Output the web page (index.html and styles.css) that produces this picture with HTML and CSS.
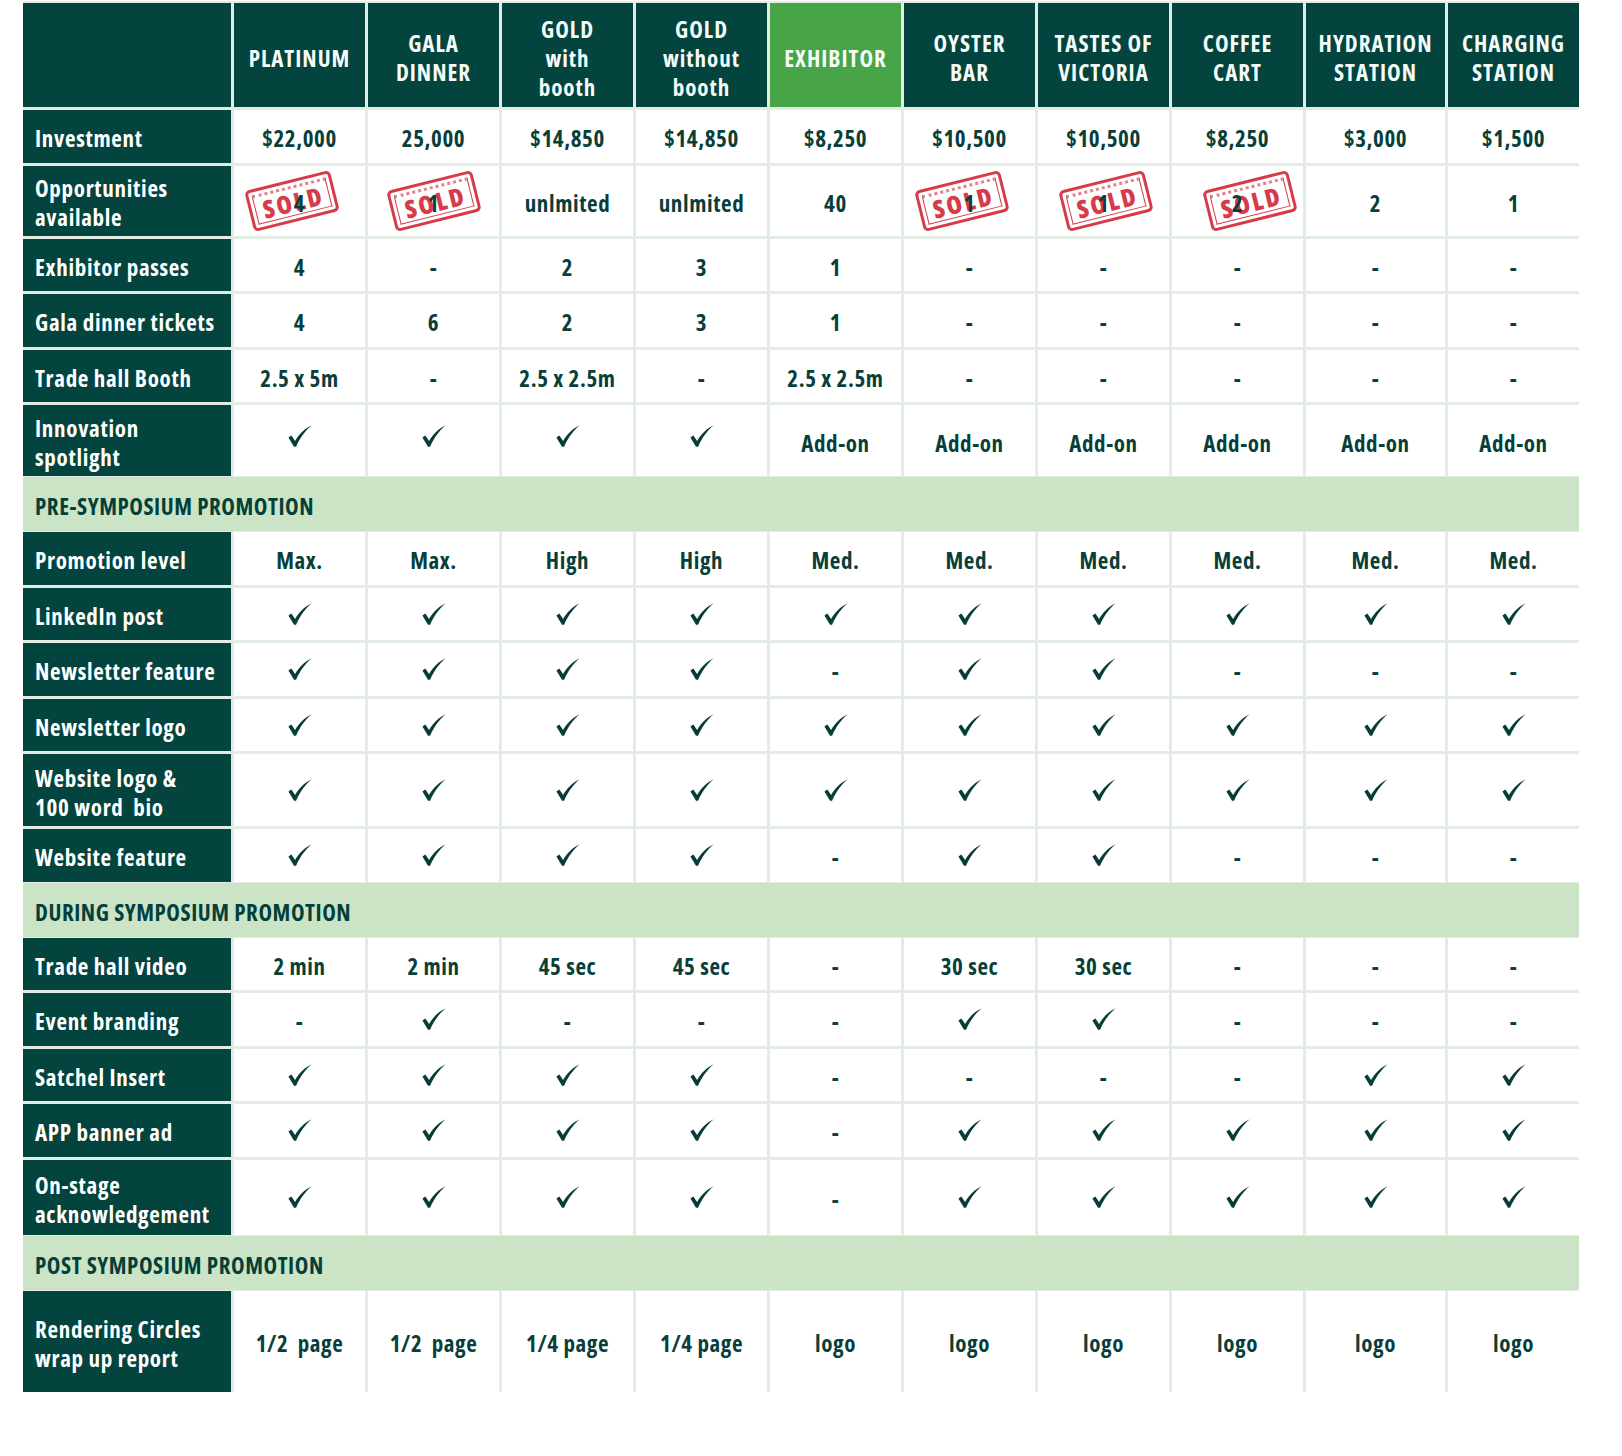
FILE: index.html
```html
<!DOCTYPE html>
<html lang="en">
<head>
<meta charset="utf-8">
<title>Sponsorship packages</title>
<link rel="stylesheet" href="styles.css">
</head>
<body>
<svg class="defs" width="0" height="0" aria-hidden="true">
  <symbol id="chk" viewBox="0 0 24 22">
    <path d="M0.4 12.4 L3.4 10.6 L7.1 15.9 C11 9.4 16.2 3.8 23.7 0.3 C17.4 5.6 12.1 12.4 8.1 21.7 L6 21.7 Z"/>
  </symbol>
</svg>

<div class="sheet">
  <div class="row head">
    <div class="cell"></div>
    <div class="cell">PLATINUM</div>
    <div class="cell">GALA<br>DINNER</div>
    <div class="cell">GOLD<br>with<br>booth</div>
    <div class="cell">GOLD<br>without<br>booth</div>
    <div class="cell hl">EXHIBITOR</div>
    <div class="cell">OYSTER<br>BAR</div>
    <div class="cell">TASTES OF<br>VICTORIA</div>
    <div class="cell">COFFEE<br>CART</div>
    <div class="cell">HYDRATION<br>STATION</div>
    <div class="cell">CHARGING<br>STATION</div>
  </div>

  <div class="row">
    <div class="cell label">Investment</div>
    <div class="cell">$22,000</div><div class="cell">25,000</div><div class="cell">$14,850</div><div class="cell">$14,850</div><div class="cell">$8,250</div>
    <div class="cell">$10,500</div><div class="cell">$10,500</div><div class="cell">$8,250</div><div class="cell">$3,000</div><div class="cell">$1,500</div>
  </div>

  <div class="row h70">
    <div class="cell label">Opportunities<br>available</div>
    <div class="cell"><span class="stamp shift-l"><span class="stamp-in">SOLD</span></span><span class="num">4</span></div>
    <div class="cell"><span class="stamp"><span class="stamp-in">SOLD</span></span><span class="num">1</span></div>
    <div class="cell">unlmited</div>
    <div class="cell">unlmited</div>
    <div class="cell">40</div>
    <div class="cell"><span class="stamp shift-l"><span class="stamp-in">SOLD</span></span><span class="num">1</span></div>
    <div class="cell"><span class="stamp shift-r"><span class="stamp-in">SOLD</span></span><span class="num">1</span></div>
    <div class="cell"><span class="stamp shift-rr"><span class="stamp-in">SOLD</span></span><span class="num">2</span></div>
    <div class="cell">2</div>
    <div class="cell">1</div>
  </div>

  <div class="row">
    <div class="cell label">Exhibitor passes</div>
    <div class="cell">4</div><div class="cell">-</div><div class="cell">2</div><div class="cell">3</div><div class="cell">1</div>
    <div class="cell">-</div><div class="cell">-</div><div class="cell">-</div><div class="cell">-</div><div class="cell">-</div>
  </div>

  <div class="row">
    <div class="cell label">Gala dinner tickets</div>
    <div class="cell">4</div><div class="cell">6</div><div class="cell">2</div><div class="cell">3</div><div class="cell">1</div>
    <div class="cell">-</div><div class="cell">-</div><div class="cell">-</div><div class="cell">-</div><div class="cell">-</div>
  </div>

  <div class="row">
    <div class="cell label">Trade hall Booth</div>
    <div class="cell">2.5 x 5m</div><div class="cell">-</div><div class="cell">2.5 x 2.5m</div><div class="cell">-</div><div class="cell">2.5 x 2.5m</div>
    <div class="cell">-</div><div class="cell">-</div><div class="cell">-</div><div class="cell">-</div><div class="cell">-</div>
  </div>

  <div class="row h71">
    <div class="cell label">Innovation<br>spotlight</div>
    <div class="cell"><svg class="chk up"><use href="#chk"/></svg></div>
    <div class="cell"><svg class="chk up"><use href="#chk"/></svg></div>
    <div class="cell"><svg class="chk up"><use href="#chk"/></svg></div>
    <div class="cell"><svg class="chk up"><use href="#chk"/></svg></div>
    <div class="cell">Add-on</div><div class="cell">Add-on</div><div class="cell">Add-on</div>
    <div class="cell">Add-on</div><div class="cell">Add-on</div><div class="cell">Add-on</div>
  </div>

  <div class="band">PRE-SYMPOSIUM PROMOTION</div>

  <div class="row">
    <div class="cell label">Promotion level</div>
    <div class="cell">Max.</div><div class="cell">Max.</div><div class="cell">High</div><div class="cell">High</div><div class="cell">Med.</div>
    <div class="cell">Med.</div><div class="cell">Med.</div><div class="cell">Med.</div><div class="cell">Med.</div><div class="cell">Med.</div>
  </div>

  <div class="row">
    <div class="cell label">LinkedIn post</div>
    <div class="cell"><svg class="chk"><use href="#chk"/></svg></div><div class="cell"><svg class="chk"><use href="#chk"/></svg></div>
    <div class="cell"><svg class="chk"><use href="#chk"/></svg></div><div class="cell"><svg class="chk"><use href="#chk"/></svg></div>
    <div class="cell"><svg class="chk"><use href="#chk"/></svg></div><div class="cell"><svg class="chk"><use href="#chk"/></svg></div>
    <div class="cell"><svg class="chk"><use href="#chk"/></svg></div><div class="cell"><svg class="chk"><use href="#chk"/></svg></div>
    <div class="cell"><svg class="chk"><use href="#chk"/></svg></div><div class="cell"><svg class="chk"><use href="#chk"/></svg></div>
  </div>

  <div class="row">
    <div class="cell label">Newsletter feature</div>
    <div class="cell"><svg class="chk"><use href="#chk"/></svg></div><div class="cell"><svg class="chk"><use href="#chk"/></svg></div>
    <div class="cell"><svg class="chk"><use href="#chk"/></svg></div><div class="cell"><svg class="chk"><use href="#chk"/></svg></div>
    <div class="cell">-</div><div class="cell"><svg class="chk"><use href="#chk"/></svg></div>
    <div class="cell"><svg class="chk"><use href="#chk"/></svg></div><div class="cell">-</div>
    <div class="cell">-</div><div class="cell">-</div>
  </div>

  <div class="row">
    <div class="cell label">Newsletter logo</div>
    <div class="cell"><svg class="chk"><use href="#chk"/></svg></div><div class="cell"><svg class="chk"><use href="#chk"/></svg></div>
    <div class="cell"><svg class="chk"><use href="#chk"/></svg></div><div class="cell"><svg class="chk"><use href="#chk"/></svg></div>
    <div class="cell"><svg class="chk"><use href="#chk"/></svg></div><div class="cell"><svg class="chk"><use href="#chk"/></svg></div>
    <div class="cell"><svg class="chk"><use href="#chk"/></svg></div><div class="cell"><svg class="chk"><use href="#chk"/></svg></div>
    <div class="cell"><svg class="chk"><use href="#chk"/></svg></div><div class="cell"><svg class="chk"><use href="#chk"/></svg></div>
  </div>

  <div class="row h72">
    <div class="cell label">Website logo &amp;<br>100 word&nbsp; bio</div>
    <div class="cell"><svg class="chk"><use href="#chk"/></svg></div><div class="cell"><svg class="chk"><use href="#chk"/></svg></div>
    <div class="cell"><svg class="chk"><use href="#chk"/></svg></div><div class="cell"><svg class="chk"><use href="#chk"/></svg></div>
    <div class="cell"><svg class="chk"><use href="#chk"/></svg></div><div class="cell"><svg class="chk"><use href="#chk"/></svg></div>
    <div class="cell"><svg class="chk"><use href="#chk"/></svg></div><div class="cell"><svg class="chk"><use href="#chk"/></svg></div>
    <div class="cell"><svg class="chk"><use href="#chk"/></svg></div><div class="cell"><svg class="chk"><use href="#chk"/></svg></div>
  </div>

  <div class="row">
    <div class="cell label">Website feature</div>
    <div class="cell"><svg class="chk"><use href="#chk"/></svg></div><div class="cell"><svg class="chk"><use href="#chk"/></svg></div>
    <div class="cell"><svg class="chk"><use href="#chk"/></svg></div><div class="cell"><svg class="chk"><use href="#chk"/></svg></div>
    <div class="cell">-</div><div class="cell"><svg class="chk"><use href="#chk"/></svg></div>
    <div class="cell"><svg class="chk"><use href="#chk"/></svg></div><div class="cell">-</div>
    <div class="cell">-</div><div class="cell">-</div>
  </div>

  <div class="band">DURING SYMPOSIUM PROMOTION</div>

  <div class="row">
    <div class="cell label">Trade hall video</div>
    <div class="cell">2 min</div><div class="cell">2 min</div><div class="cell">45 sec</div><div class="cell">45 sec</div><div class="cell">-</div>
    <div class="cell">30 sec</div><div class="cell">30 sec</div><div class="cell">-</div><div class="cell">-</div><div class="cell">-</div>
  </div>

  <div class="row">
    <div class="cell label">Event branding</div>
    <div class="cell">-</div><div class="cell"><svg class="chk"><use href="#chk"/></svg></div>
    <div class="cell">-</div><div class="cell">-</div><div class="cell">-</div>
    <div class="cell"><svg class="chk"><use href="#chk"/></svg></div><div class="cell"><svg class="chk"><use href="#chk"/></svg></div>
    <div class="cell">-</div><div class="cell">-</div><div class="cell">-</div>
  </div>

  <div class="row">
    <div class="cell label">Satchel Insert</div>
    <div class="cell"><svg class="chk"><use href="#chk"/></svg></div><div class="cell"><svg class="chk"><use href="#chk"/></svg></div>
    <div class="cell"><svg class="chk"><use href="#chk"/></svg></div><div class="cell"><svg class="chk"><use href="#chk"/></svg></div>
    <div class="cell">-</div><div class="cell">-</div><div class="cell">-</div><div class="cell">-</div>
    <div class="cell"><svg class="chk"><use href="#chk"/></svg></div><div class="cell"><svg class="chk"><use href="#chk"/></svg></div>
  </div>

  <div class="row">
    <div class="cell label">APP banner ad</div>
    <div class="cell"><svg class="chk"><use href="#chk"/></svg></div><div class="cell"><svg class="chk"><use href="#chk"/></svg></div>
    <div class="cell"><svg class="chk"><use href="#chk"/></svg></div><div class="cell"><svg class="chk"><use href="#chk"/></svg></div>
    <div class="cell">-</div><div class="cell"><svg class="chk"><use href="#chk"/></svg></div>
    <div class="cell"><svg class="chk"><use href="#chk"/></svg></div><div class="cell"><svg class="chk"><use href="#chk"/></svg></div>
    <div class="cell"><svg class="chk"><use href="#chk"/></svg></div><div class="cell"><svg class="chk"><use href="#chk"/></svg></div>
  </div>

  <div class="row h75">
    <div class="cell label">On-stage<br>acknowledgement</div>
    <div class="cell"><svg class="chk"><use href="#chk"/></svg></div><div class="cell"><svg class="chk"><use href="#chk"/></svg></div>
    <div class="cell"><svg class="chk"><use href="#chk"/></svg></div><div class="cell"><svg class="chk"><use href="#chk"/></svg></div>
    <div class="cell">-</div><div class="cell"><svg class="chk"><use href="#chk"/></svg></div>
    <div class="cell"><svg class="chk"><use href="#chk"/></svg></div><div class="cell"><svg class="chk"><use href="#chk"/></svg></div>
    <div class="cell"><svg class="chk"><use href="#chk"/></svg></div><div class="cell"><svg class="chk"><use href="#chk"/></svg></div>
  </div>

  <div class="band">POST SYMPOSIUM PROMOTION</div>

  <div class="row big">
    <div class="cell label">Rendering Circles<br>wrap up report</div>
    <div class="cell">1/2&nbsp; page</div><div class="cell">1/2&nbsp; page</div><div class="cell">1/4 page</div><div class="cell">1/4 page</div>
    <div class="cell">logo</div><div class="cell">logo</div><div class="cell">logo</div><div class="cell">logo</div><div class="cell">logo</div><div class="cell">logo</div>
  </div>
</div>
</body>
</html>
```

FILE: styles.css
```css
html, body {
  margin: 0;
  padding: 0;
  background: #ffffff;
}

body {
  padding-top: 1px;
  font-family: "Liberation Sans Narrow", "Arial Narrow", "Open Sans", "Liberation Sans", sans-serif;
  font-stretch: 75%;
  font-weight: 700;
}

.defs {
  position: absolute;
  width: 0;
  height: 0;
  overflow: hidden;
}

.sheet {
  width: 1556px;
  margin-left: 23px;
  border-top: 2px solid #e4ede5;
  background: #e4ede5;
}

.row {
  display: grid;
  grid-template-columns: 208px repeat(8, 131px) 139px 131px;
  column-gap: 3px;
  height: 52.5px;
  background: #e4ede5;
}

.row + .row {
  margin-top: 3px;
}

.row.h70 { height: 70px; }
.row.h71 { height: 71px; }
.row.h72 { height: 72px; }
.row.h75 { height: 75px; }
.row.big { height: 101px; }

.cell {
  position: relative;
  display: flex;
  align-items: center;
  justify-content: center;
  box-sizing: border-box;
  padding-top: 5px;
  text-align: center;
  background: #ffffff;
  color: #083f3a;
  font-size: 23px;
  line-height: 29px;
  letter-spacing: 0.6px;
  white-space: nowrap;
}

.cell.label {
  justify-content: flex-start;
  text-align: left;
  padding-left: 12px;
  background: #03443e;
  color: #ffffff;
  letter-spacing: 0.7px;
}

.row.head {
  height: 104px;
}

.row.head .cell {
  padding-top: 6px;
  background: #03443e;
  color: #f4fbf8;
  letter-spacing: 1px;
}

.row.head .cell.hl {
  background: #47a548;
}

.band {
  display: flex;
  align-items: center;
  box-sizing: border-box;
  height: 54px;
  margin: 1px 0;
  padding: 4px 0 0 12px;
  background: #cbe4c5;
  color: #053f3a;
  font-size: 23px;
  letter-spacing: 0.55px;
}

.chk {
  width: 24px;
  height: 22px;
  margin-top: -5px;
  fill: #073d38;
}

.chk.up {
  margin-top: -15px;
}

.stamp {
  position: absolute;
  left: 50%;
  top: 50%;
  width: 88px;
  height: 42px;
  margin: -21px 0 0 -44px;
  box-sizing: border-box;
  padding: 3px;
  border: 3.5px solid #d52c3c;
  border-radius: 5px;
  transform: rotate(-14deg);
  color: #d52c3c;
  opacity: 0.93;
}

.stamp.shift-l {
  margin-left: -52px;
}

.stamp.shift-r {
  margin-left: -42px;
}

.stamp.shift-rr {
  margin-left: -32px;
}

.stamp-in {
  display: flex;
  align-items: center;
  justify-content: center;
  box-sizing: border-box;
  height: 100%;
  border: 1.5px solid #d52c3c;
  border-top: 3px dotted #e07884;
  font-size: 25px;
  line-height: 25px;
  font-weight: 800;
  letter-spacing: 2.5px;
  padding: 1px 0 0 2px;
}

.num {
  position: relative;
  z-index: 1;
}
```
